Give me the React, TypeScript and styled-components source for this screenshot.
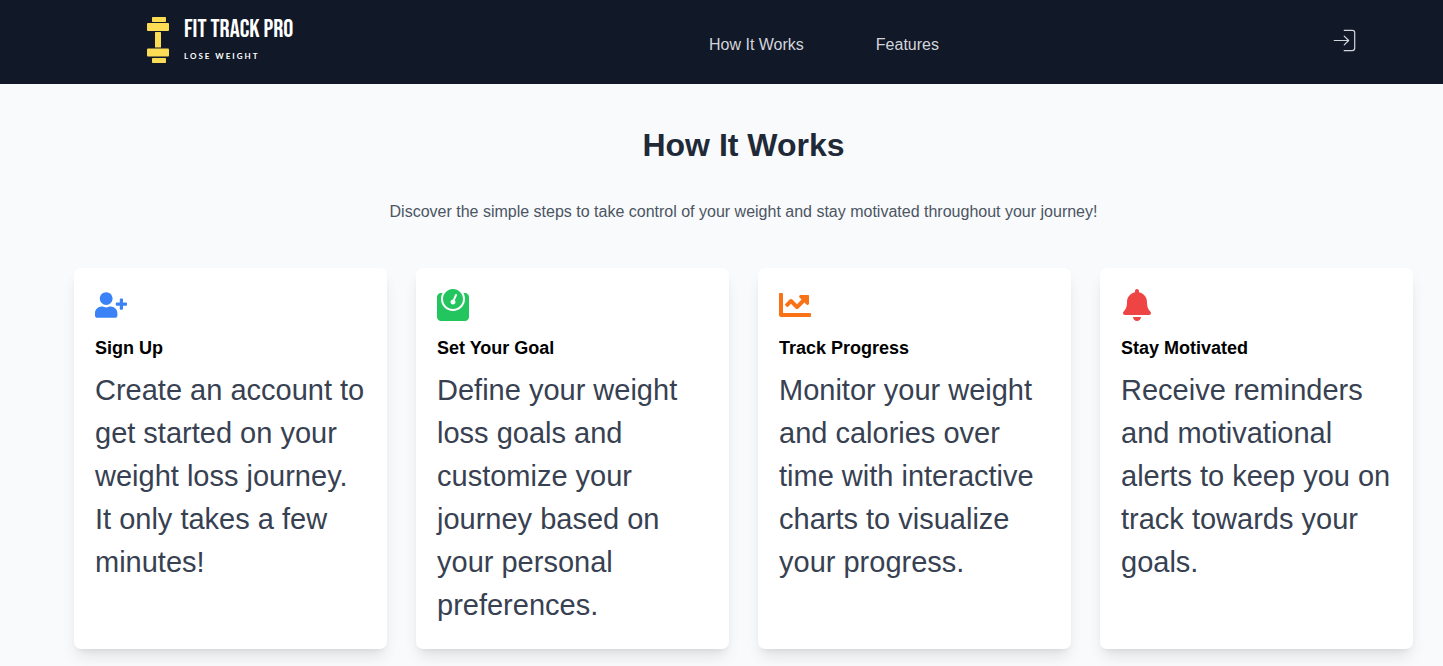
import React from "react";
import styled, { createGlobalStyle } from "styled-components";
import { FaBell, FaChartLine, FaUserPlus, FaWeight } from "react-icons/fa";
import { CiLogin } from "react-icons/ci";
import type { IconType } from "react-icons";

const GlobalStyle = createGlobalStyle`
  *, *::before, *::after {
    box-sizing: border-box;
  }
  body {
    margin: 0;
    background: #f9fafb;
    color: #000;
    font-family: "Liberation Sans", Arial, sans-serif;
    font-size: 16px;
    line-height: 24px;
  }
  h1, h2, h3, p {
    margin: 0;
  }
`;

const Header = styled.header`
  display: flex;
  align-items: center;
  justify-content: space-between;
  min-height: 84px;
  padding: 0 84px 4px 146px;
  background: #111827;
`;

const Brand = styled.a`
  display: flex;
  align-items: center;
  gap: 14px;
  width: 172px;
  color: #fff;
  text-decoration: none;
`;

const Logo = styled.svg`
  flex: none;
`;

const BrandText = styled.span`
  display: flex;
  flex-direction: column;
  gap: 8px;
  white-space: nowrap;
`;

const BrandName = styled.span`
  font-family: "Bebas Neue", "Roboto Condensed", Roboto, sans-serif;
  font-size: 25px;
  font-weight: 400;
  line-height: 24px;
`;

const BrandTagline = styled.span`
  font-family: Lato, sans-serif;
  font-size: 8px;
  font-weight: 700;
  line-height: 12px;
  letter-spacing: 2px;
`;

const Nav = styled.nav`
  display: flex;
  gap: 72px;
  padding-top: 10px;
`;

const NavLink = styled.a`
  color: #d1d5db;
  text-decoration: none;
  white-space: nowrap;
`;

const LoginButton = styled.button`
  display: flex;
  padding: 0;
  border: 0;
  background: none;
  color: #d1d5db;
  font-size: 29px;
  cursor: pointer;
`;

const Section = styled.main`
  display: flex;
  flex-direction: column;
  padding: 40px 30px 44px 74px;
`;

const Title = styled.h1`
  color: #1f2937;
  font-size: 32px;
  line-height: 43px;
  text-align: center;
`;

const Intro = styled.p`
  margin: 33px 0 44px;
  color: #4b5563;
  text-align: center;
`;

const Steps = styled.div`
  display: grid;
  grid-template-columns: repeat(auto-fit, minmax(280px, 1fr));
  gap: 29px;
`;

const Card = styled.article`
  padding: 21px;
  border-radius: 7px;
  background: #fff;
  box-shadow: 0 10px 15px -3px rgba(0, 0, 0, 0.1), 0 4px 6px -4px rgba(0, 0, 0, 0.1);
`;

const CardIcon = styled.div<{ $color: string }>`
  display: flex;
  margin-bottom: 15px;
  color: ${({ $color }) => $color};
  font-size: 32px;
`;

const CardTitle = styled.h3`
  margin-bottom: 8px;
  font-size: 18px;
  line-height: 25px;
`;

const CardText = styled.p`
  margin-bottom: 1px;
  color: #374151;
  font-size: 29px;
  line-height: 43px;
`;

type Step = { icon: IconType; color: string; title: string; text: string };

const steps: Step[] = [
  {
    icon: FaUserPlus,
    color: "#3b82f6",
    title: "Sign Up",
    text: "Create an account to get started on your weight loss journey. It only takes a few minutes!",
  },
  {
    icon: FaWeight,
    color: "#22c55e",
    title: "Set Your Goal",
    text: "Define your weight loss goals and customize your journey based on your personal preferences.",
  },
  {
    icon: FaChartLine,
    color: "#f97316",
    title: "Track Progress",
    text: "Monitor your weight and calories over time with interactive charts to visualize your progress.",
  },
  {
    icon: FaBell,
    color: "#ef4444",
    title: "Stay Motivated",
    text: "Receive reminders and motivational alerts to keep you on track towards your goals.",
  },
];

function Dumbbell() {
  return (
    <Logo width="24" height="48" viewBox="0 0 24 48" fill="#fcdb55" aria-hidden="true">
      <rect x="6" y="1" width="14" height="5" rx="0.7" />
      <rect x="1" y="7" width="22" height="8" rx="1" />
      <rect x="9" y="16" width="6" height="15.5" rx="0.5" />
      <rect x="1" y="32.5" width="22" height="8" rx="1" />
      <rect x="6" y="42" width="14" height="5" rx="0.7" />
    </Logo>
  );
}

export default function App() {
  return (
    <>
      <GlobalStyle />
      <Header>
        <Brand href="#">
          <Dumbbell />
          <BrandText>
            <BrandName>FIT TRACK PRO</BrandName>
            <BrandTagline>LOSE WEIGHT</BrandTagline>
          </BrandText>
        </Brand>
        <Nav>
          <NavLink href="#how-it-works">How It Works</NavLink>
          <NavLink href="#features">Features</NavLink>
        </Nav>
        <LoginButton type="button" aria-label="Log in">
          <CiLogin />
        </LoginButton>
      </Header>
      <Section id="how-it-works">
        <Title>How It Works</Title>
        <Intro>
          Discover the simple steps to take control of your weight and stay motivated throughout your journey!
        </Intro>
        <Steps>
          {steps.map(({ icon: Icon, color, title, text }) => (
            <Card key={title}>
              <CardIcon $color={color}>
                <Icon />
              </CardIcon>
              <CardTitle>{title}</CardTitle>
              <CardText>{text}</CardText>
            </Card>
          ))}
        </Steps>
      </Section>
    </>
  );
}
